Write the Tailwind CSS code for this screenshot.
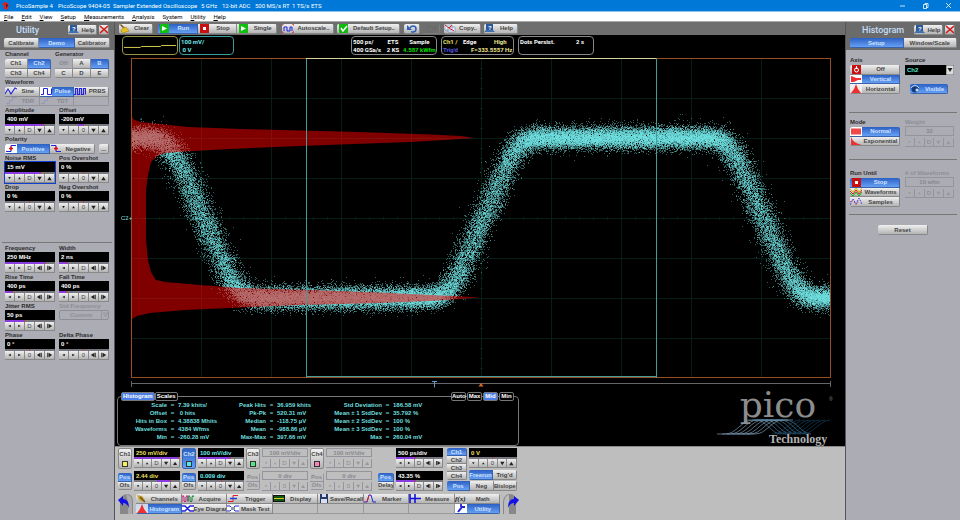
<!DOCTYPE html>
<html lang="en">
<head>
  <meta charset="UTF-8" />
  <meta name="viewport" content="width=device-width, initial-scale=1.0"/>
  <title>PicoSample 4</title>
  <script src="https://cdn.jsdelivr.net/npm/@tailwindcss/browser@4"></script>
</head>
<body class="h-screen flex flex-col overflow-hidden bg-[#acacb5] font-['Liberation_Sans',sans-serif] text-[6px] leading-[8px] font-bold text-[#2c2c2c] whitespace-nowrap">

  <!-- title bar -->
  <header class="h-3 shrink-0 flex items-center bg-[#0078d7] border-b border-[#8cc4f0] text-white font-normal font-['Roboto',sans-serif]">
    <svg class="w-4 h-2.5" viewBox="0 0 16 10"><path d="M4 1l4 1 1 3-2 4-4-2 2-2-3-1z" fill="#e02020"/><path d="M6 3l2 1-2 3z" fill="#222"/></svg>
    <span class="w-[42px]">PicoSample 4</span>
    <span class="w-[55px]">PicoScope 9404-05</span>
    <span class="w-[88px]">Sampler Extended Oscilloscope</span>
    <span class="w-[21px]">5 GHz</span>
    <span class="w-[33px]">12-bit ADC</span>
    <span class="w-[37px]">500 MS/s RT</span>
    <span>1 TS/s ETS</span>
    <div class="ml-auto flex gap-4 pr-2">
      <button aria-label="Minimize"><svg class="w-[7px] h-[7px]" viewBox="0 0 7 7"><path d="M1 4h5" stroke="#fff" stroke-width=".8"/></svg></button>
      <button aria-label="Restore"><svg class="w-[7px] h-[7px]" viewBox="0 0 7 7" fill="none" stroke="#fff" stroke-width=".8"><path d="M1.5 2.5h3v4h-3zM3 2.5v-1h3v4h-1.500"/></svg></button>
      <button aria-label="Close"><svg class="w-[7px] h-[7px]" viewBox="0 0 7 7"><path d="M1 1l5 5M6 1l-5 5" stroke="#fff" stroke-width=".8"/></svg></button>
    </div>
  </header>
  <nav class="h-[10px] shrink-0 flex items-center gap-2 pl-1 bg-white text-black font-normal font-['Roboto',sans-serif] border-b border-[#aaa]">
    <button><u>F</u>ile</button><button><u>E</u>dit</button><button><u>V</u>iew</button><button><u>S</u>etup</button><button><u>M</u>easurements</button><button><u>A</u>nalysis</button><button>S<u>y</u>stem</button><button><u>U</u>tility</button><button><u>H</u>elp</button>
  </nav>

  <div class="flex-1 min-h-0 flex">

    <!-- utility panel -->
    <aside class="w-[115px] shrink-0 border-r border-[#555]">
      <div class="h-7 bg-[#6b6b6b] px-1 pt-px">
        <div class="h-[14px] flex items-center">
          <h2 class="w-16 pl-3 text-[9px] font-medium text-[#c3defa] font-['Roboto',sans-serif]">Utility</h2>
          <div class="w-[29px] h-[10px] grid" data-btns="#help Help"></div>
          <div class="w-[10px] h-[10px] ml-[2px] grid" data-btns="#close"></div>
        </div>
        <div class="mt-px h-[10px] grid grid-cols-3" data-btns="Calibrate|*Demo|Calibrator"></div>
      </div>
      <div class="px-[5px]">
        <div class="flex justify-between">
          <div class="w-[46px]"><div class="h-[9px]">Channel</div><div class="h-[19px] grid grid-cols-2" data-btns="Ch1|*Ch2|Ch3|Ch4"></div></div>
          <div class="w-[54px]"><div class="h-[9px]">Generator</div><div class="h-[19px] grid grid-cols-3" data-btns="!Off|A|*B|C|D|E"></div></div>
        </div>
        <div class="h-[9px]">Waveform</div>
        <div class="h-[19px] grid grid-cols-3" data-btns="#sine Sine|*#pulse Pulse|#prbs PRBS|!#step TDR|!#step TDT|!"></div>
        <div class="grid grid-cols-2 gap-x-1">
          <div data-field="Amplitude" data-value="400 mV" data-bar="0,78"></div>
          <div data-field="Offset" data-value="-200 mV" data-bar="38,12" data-mid="0"></div>
        </div>
        <div class="h-[9px]">Polarity</div>
        <div class="flex justify-between h-[10px]">
          <div class="w-[90px] grid grid-cols-2" data-btns="*#rise Positive|#fall Negative"></div>
          <div class="w-[10px] grid" data-btns="..."></div>
        </div>
        <div class="grid grid-cols-2 gap-x-1">
          <div data-field="Noise RMS" data-value="15 mV" data-bar="0,72" data-focus="1"></div>
          <div data-field="Pos Overshot" data-value="0 %" data-bar="48,0" data-mid="0"></div>
          <div data-field="Drop" data-value="0 %" data-bar="48,0" data-mid="0"></div>
          <div data-field="Neg Overshot" data-value="0 %" data-bar="48,0" data-mid="0"></div>
        </div>
      </div>
      <hr class="mx-[2px] mt-[30px] border-[#777]" />
      <div class="px-[5px] pt-px grid grid-cols-2 gap-x-1">
        <div data-field="Frequency" data-value="250 MHz" data-bar="0,82" data-dir="h"></div>
        <div data-field="Width" data-value="2 ns" data-bar="0,17" data-dir="h"></div>
        <div data-field="Rise Time" data-value="400 ps" data-bar="0,15" data-dir="h"></div>
        <div data-field="Fall Time" data-value="400 ps" data-bar="0,15" data-dir="h"></div>
        <div data-field="Jitter RMS" data-value="50 ps" data-bar="0,40" data-dir="h"></div>
        <label class="block text-[#8e8e96]">
          <span class="block h-2">Std Frequency</span>
          <span class="relative block">
            <select disabled class="block w-full h-[10px] appearance-none rounded-xs border border-[#8e8e96] pl-2.5 leading-[8px] opacity-100"><option>Custom</option></select>
            <svg class="absolute right-0 top-0 w-2 h-[10px]" viewBox="0 0 8 10"><path d="M.5 0v10M2.500 3h4l-2 4z" fill="none" stroke="#8e8e96" stroke-width=".7"/></svg>
          </span>
        </label>
        <div data-field="Phase" data-value="0 °" data-bar="48,0" data-mid="0" data-dir="h"></div>
        <div data-field="Delta Phase" data-value="0 °" data-bar="48,0" data-mid="0" data-dir="h"></div>
      </div>
    </aside>

    <!-- scope display -->
    <main class="flex-1 min-w-0 flex flex-col bg-black">
      <div class="h-[13px] shrink-0 flex items-center pl-1 bg-[#6e6e6e] [&>div]:h-[10px] [&>div]:grid">
        <div class="w-[34px]" data-btns="#broom Clear"></div>
        <div class="w-[119px] ml-[5px] grid-cols-3" data-btns="*#play Run|#stop Stop|#play Single"></div>
        <div class="w-[52px] ml-[5px]" data-btns="#auto Autoscale.."></div>
        <div class="w-[63px] ml-[3px]" data-btns="#check Default Setup.."></div>
        <div class="w-4 ml-1" data-btns="#undo"></div>
        <div class="w-[17px] ml-[3px] opacity-40" data-btns="!#redo"></div>
        <div class="w-[37px] ml-1" data-btns="#copy Copy.."></div>
        <div class="w-[34px] ml-[3px]" data-btns="#help Help"></div>
      </div>

      <div class="h-[23px] shrink-0 flex pl-[7px] pt-px font-['Roboto',sans-serif] [&>div]:h-[19px] [&>div]:rounded-sm [&>div]:border [&>div]:px-px [&>div]:pt-px text-white">
        <div class="w-14 border-[#9a9440]"><svg class="w-full h-4" viewBox="0 0 54 16" fill="none"><path d="M0 9.500h17l1-1h20l1-1h15" stroke="#d8d050"/></svg></div>
        <div class="w-[55px] ml-px border-[#3c9c9c] text-[#6fe8e8]">100 mV/<br>&nbsp;0 V</div>
        <div class="w-[86px] ml-[117px] border-[#888] grid grid-cols-[30px_20px_auto]"><span>500 ps/</span><span class="text-center">ETS</span><span class="text-center">Sample</span><span>400 GSa/s</span><span class="text-center">2 KS</span><span class="text-right text-[#00e000]">4.587 kWfm</span></div>
        <div class="w-[73px] ml-1 border-[#888] grid grid-cols-[20px_auto_auto]"><span class="text-[#e8e060]">Ch1 /</span><span>Edge</span><span class="text-[#f0e890] text-center">High</span><span class="text-[#5656e0]">Trig'd</span><span class="col-span-2 text-[#f0e890] pl-2">F=333.5557 Hz</span></div>
        <div class="w-[76px] ml-1 border-[#888] flex justify-between"><span>Dots Persist.</span><span class="pr-2">2 s</span></div>
      </div>

      <div class="relative flex-1 min-h-0 pl-4 pr-3.5 flex">
        <canvas id="scope" class="block flex-1 min-w-0 w-full h-full"></canvas>
        <span class="absolute left-1.5 top-1/2 -translate-y-1/2 font-normal text-[#7fe0e0]">C2+</span>
      </div>
      <div class="h-[13px] shrink-0 pl-4 pr-3.5">
        <svg class="w-full h-[11px]" viewBox="0 0 700 11" preserveAspectRatio="none" fill="none" stroke="#666"><path d="M0 5.500h700M.5 3v6M699.500 3v6"/><path d="M301 3.500h5M303.500 3.500v6" stroke="#5a9ad0"/><path d="M347.500 8.500h5l-2.500-3.500z" fill="#e06820" stroke="none"/></svg>
      </div>

      <!-- measurements -->
      <div class="h-[55px] shrink-0 flex justify-between pl-[2px] pr-2">
        <section class="relative w-[402px] mt-[5px] h-[50px] rounded-sm border border-[#777] pt-1 text-[#6fdede]">
          <div class="absolute left-[3px] -top-[5px] flex [&>button]:h-[9px] [&>button]:px-px [&>button]:border [&>button]:border-[#777] [&>button]:rounded-xs [&>button]:leading-[7px] text-white">
            <button class="bg-[#4c80e8]">Histogram</button><button class="bg-black">Scales</button>
          </div>
          <div class="absolute right-1 -top-[5px] flex gap-px [&>button]:h-[9px] [&>button]:w-[15px] [&>button]:border [&>button]:border-[#777] [&>button]:rounded-xs [&>button]:leading-[7px] text-white">
            <button class="bg-black">Auto</button><button class="bg-black">Max</button><button class="bg-[#4c80e8]">Mid</button><button class="bg-black">Min</button>
          </div>
          <table class="table-fixed w-[315px] border-collapse">
            <colgroup><col class="w-[49px]"><col class="w-[11px]"><col class="w-[38px]"><col class="w-[50px]"><col class="w-[11px]"><col class="w-[38px]"><col class="w-[67px]"><col class="w-[11px]"><col class="w-10"></colgroup>
            <tbody id="stats"></tbody>
          </table>
        </section>
        <svg class="w-32 h-[55px]" viewBox="0 0 128 55">
          <text x="69" y="26" text-anchor="middle" font-family="DejaVu Serif" font-weight="400" font-size="36" fill="#8c8c8c">pico</text>
          <text x="120" y="10" font-family="Liberation Sans" font-weight="400" font-size="5" fill="#8c8c8c">®</text>
          <g id="logo-waves" fill="none" stroke-width=".7"></g>
          <text x="60" y="52" font-family="Liberation Serif" font-weight="700" font-size="12" fill="#b4b4b4">Technology</text>
        </svg>
      </div>

      <!-- channel controls -->
      <footer class="h-[74px] shrink-0 bg-[#bebebe] border-t border-[#888] pl-[3px] pt-px">
        <div class="flex">
          <div class="flex gap-[2px]" id="channels"></div>
          <div class="ml-1.5 w-4 pt-[25px]"><div class="h-[17px] grid" data-btns="*Pos|Delay"></div></div>
          <div class="ml-[2px] w-[47px] flex flex-col gap-[3px] text-white">
            <div data-name="Time base" data-value="500 ps/div" data-bar="0,42" data-dir="h"></div>
            <div data-name="Delay" data-value="43.35 %" data-bar="0,43" data-dir="h"></div>
          </div>
          <div class="ml-1 w-[70px]">
            <div class="flex gap-[2px]">
              <div class="w-5 h-8 grid" data-btns="*Ch1|Ch2|Ch3|Ch4"></div>
              <div class="w-12">
                <div class="text-[#f0e060]" data-name="Trigger level" data-value="0 V" data-bar="48,0" data-mid="0"></div>
                <div class="mt-[2px] h-[10px] grid grid-cols-2" data-btns="*Freerun|Trig'd"></div>
              </div>
            </div>
            <div class="mt-px h-[10px] grid grid-cols-3" data-btns="*Pos|Neg|Bislope"></div>
          </div>
        </div>
        <div class="mt-[3px] flex items-center gap-[2px]">
          <svg class="w-4 h-5" viewBox="0 0 16 20"><path d="M2 20V8q1-8 7-8t6 8v12z" fill="#888"/><path d="M8 0q6 1 6 8v12h-4V8z" fill="#aaa"/><path d="M0 6l5-4v3q6 0 6 9-2-5-6-5v3z" fill="#1111e8"/></svg>
          <div class="w-[364px] h-5 grid grid-cols-8" data-btns="#brush Channels|#acquire Acquire|#trigger Trigger|#display Display|#disk Save/Recall|#marker Marker|#measure Measure|#math Math|*#histv Histogram|#eye Eye Diagram|#mask Mask Test|~|~|~|~|*#wrench Utility"></div>
          <svg class="w-[18px] h-5" viewBox="0 0 18 20"><path d="M1 20V8q1-8 7-8t6 8v12z" fill="#888"/><path d="M2 20V8q1-7 5-7v19z" fill="#bbb"/><path d="M17 6l-5-4v3q-6 0-6 9 2-5 6-5v3z" fill="#1111e8"/></svg>
        </div>
      </footer>
    </main>

    <!-- histogram panel -->
    <aside class="w-[115px] shrink-0 border-l border-[#555]">
      <div class="h-7 bg-[#6b6b6b] pl-1 pr-[3px] pt-px">
        <div class="h-[14px] flex items-center">
          <h2 class="w-16 pl-3 text-[9px] font-medium text-[#c3defa] font-['Roboto',sans-serif]">Histogram</h2>
          <div class="w-[29px] h-[10px] grid" data-btns="#help Help"></div>
          <div class="w-[10px] h-[10px] ml-[2px] grid" data-btns="#close"></div>
        </div>
        <div class="mt-px h-[10px] grid grid-cols-2" data-btns="*Setup|Window/Scale"></div>
      </div>
      <div class="px-[3px]">
        <div class="flex gap-[5px] px-px pt-[6px] h-[62px]">
          <div class="w-[50px]"><div class="h-[9px]">Axis</div><div class="h-[29px] grid" data-btns="#power Off|*#histh Vertical|#histv Horizontal"></div></div>
          <div class="w-[49px]">
            <label class="block h-[9px]" for="source">Source</label>
            <div class="relative">
              <select id="source" class="block w-full h-[10px] appearance-none bg-black text-[#50e8d0] pl-[2px]"><option>Ch2</option></select>
              <svg class="absolute right-0 top-0 w-2 h-[10px]" viewBox="0 0 8 10"><rect width="8" height="10" fill="#ddd" stroke="#666"/><path d="M1.500 3h5l-2.500 4z" fill="#222"/></svg>
            </div>
            <div class="ml-[5px] mt-[9px] w-[38px] h-[10px] grid" data-btns="*#eyeball Visible"></div>
          </div>
        </div>
        <hr class="border-[#777]" />
        <div class="flex gap-[5px] px-px pt-[5px] h-[46px]">
          <div class="w-[50px]"><div class="h-[9px]">Mode</div><div class="h-[19px] grid" data-btns="*#norm Normal|#expo Exponential"></div></div>
          <div class="w-[49px]" data-field="Weight" data-value="32" data-off="1"></div>
        </div>
        <hr class="border-[#777]" />
        <div class="flex gap-[5px] px-px pt-[9px] h-[54px]">
          <div class="w-[50px]"><div class="h-[9px]">Run Until</div><div class="h-[29px] grid" data-btns="*#stop Stop|#waves Waveforms|#samples Samples"></div></div>
          <div class="w-[49px]" data-field="# of Waveforms" data-value="10 wfm" data-off="1"></div>
        </div>
        <hr class="border-[#777]" />
        <div class="mt-[10px] mx-auto w-[50px] h-[10px] grid" data-btns="Reset"></div>
      </div>
    </aside>
  </div>

  <script>
    // icon bodies, all on a 12x9 box
    const icons = {
      help: '<path d="M2 0h7v7H2z" fill="#2a5a9a"/><path d="M0 8h11l-2-2H2z" fill="#3f70b0"/><text x="4" y="6" font-size="6" fill="#fff">?</text>',
      close: '<path d="M2 1l8 7M10 1L2 8" stroke="#d81818" stroke-width="1.6"/>',
      sine: '<path d="M0 7l3-5 3 5 4-6 2 1" fill="none" stroke="#2222dd" stroke-width="1.100"/>',
      pulse: '<path d="M0 0h12v9H0z" fill="#fff"/><path d="M1 7.500h2.500v-6h4v6h4v-6" fill="none" stroke="#2222dd"/>',
      prbs: '<path d="M0 7.500h1.500v-6h2v6h2v-6h2v6h2v-6h2v6" fill="none" stroke="#2222dd" stroke-width="1.200"/>',
      step: '<path d="M1 7.500h3.500v-3h3v-3h4" fill="none" stroke="#9696b8"/>',
      rise: '<path d="M0 0h12v9H0z" fill="#fff"/><path d="M1 7.500h5v-6h5" fill="none" stroke="#2222dd"/><path d="M4 4.500h4M6 2.500v4" stroke="#e01010" stroke-width="1.300"/>',
      fall: '<path d="M1 1.500h5v6h5" fill="none" stroke="#2222dd"/><path d="M4 4.500h4M6 2.500v4" stroke="#e01010" stroke-width="1.300"/>',
      broom: '<path d="M2 0l4 4-1 1-4-4z" fill="#7a4a10"/><path d="M4 4l3-1 3 4-6 2-2-2z" fill="#e8c020" stroke="#a07810" stroke-width=".5"/>',
      play: '<path d="M2 0h9v9H2z" fill="#10c010"/><path d="M4 2l5 2.500L4 7z" fill="#fff"/>',
      stop: '<path d="M2 0h9v9H2z" fill="#c81010"/><path d="M5 3h3v3H5z" fill="#fff"/>',
      power: '<path d="M2 0h9v9H2z" fill="#c81010"/><circle cx="6.500" cy="5" r="2" fill="none" stroke="#fff"/><path d="M6.500 1v3" stroke="#fff"/>',
      auto: '<path d="M2 7V3h3v4h3V3h2v4" fill="none" stroke="#2222dd"/><path d="M0 2V0h2M10 0h2v2M12 7v2h-2M2 9H0V7" fill="none" stroke="#e02020"/>',
      check: '<path d="M2 0h9v9H2z" fill="#10b810"/><path d="M4 4l2 3 4-5" fill="none" stroke="#fff" stroke-width="1.400"/>',
      undo: '<path d="M5 8h2q3 0 3-3T7 2Q5 2 4 4" fill="none" stroke="#2c5fb8" stroke-width="1.500"/><path d="M1 1v5h5z" fill="#2c5fb8"/>',
      redo: '<path d="M7 8H5Q2 8 2 5t3-3q2 0 3 2" fill="none" stroke="#666"/><path d="M11 1v5H6z" fill="#666"/>',
      copy: '<path d="M1 1h7v5H1zM4 3h7v5H4z" fill="#eef" stroke="#6688aa" stroke-width=".6"/><path d="M1 1l4 3 3-3M5 4l5 3" stroke="#d82020" fill="none"/>',
      histh: '<path d="M0 0h12v9H0z" fill="#fff"/><path d="M1 1l3 1 2 1h5v2H8L4 7H1z" fill="#f03030"/>',
      histv: '<path d="M0 0h12v9H0z" fill="#f4f4f4" opacity=".8"/><path d="M1 9h10L8 5 6 0 4 5z" fill="#f03030"/>',
      eyeball: '<circle cx="5" cy="5" r="3.500" fill="#123a80"/><path d="M1 4q4-5 8 0" stroke="#cde" fill="none"/><circle cx="7" cy="6" r="1.500" fill="#cde"/>',
      norm: '<path d="M0 0h12v9H0z" fill="#fff"/><path d="M1 1.500h10v6H1z" fill="#f04848"/>',
      expo: '<path d="M1 0q1 7 11 9H1z" fill="#f03030"/>',
      waves: '<path d="M0 3l3 3 3-4 3 4 3-4" fill="none" stroke="#e02020"/><path d="M0 5l3 3 3-4 3 4 3-4" fill="none" stroke="#10b010"/><path d="M0 1l3 3 3-4 3 4 3-4" fill="none" stroke="#d8c010"/>',
      samples: '<path d="M0 8l3-6 3 5 3-6 3 6" fill="none" stroke="#4040e0" stroke-dasharray="2 1"/><path d="M0 5l3-2 3 5 3-4" fill="none" stroke="#e03030" stroke-dasharray="1 2"/>',
      brush: '<path d="M1 1l5 1 3 4-2 2-4-2z" fill="#c8a030"/><path d="M4 3l5 5" stroke="#775511" stroke-width="1.500"/>',
      acquire: '<path d="M0 8V3q1-3 2 0v4q1 2 2 0V3q1-3 2 0v5" fill="none" stroke="#c02080"/><path d="M6 7V3q1-3 2 0v4q1 2 2 0V3q1-3 2 0" fill="none" stroke="#108030"/>',
      trigger: '<path d="M1 7.500h5v-6h5" fill="none" stroke="#e02020"/><path d="M3 4.500h7" stroke="#2040e0" stroke-width="1.500"/>',
      display: '<path d="M0 1h12v7H0z" fill="#111"/><path d="M1 3h10M1 6h10" stroke="#10a010"/><path d="M1 4.500h10" stroke="#d8c820"/>',
      disk: '<path d="M2 0h8v9H2z" fill="#223a6a"/><path d="M4 0h4v3H4zM3 5h6v4H3z" fill="#dde"/>',
      marker: '<path d="M0 8h3l2-7h2l2 7h3" fill="none" stroke="#2222dd"/><path d="M3 8l2-7" stroke="#e02020"/>',
      measure: '<path d="M1 0v9M6 0v9M1 4.500h11" stroke="#1111dd" stroke-width="1.600"/>',
      math: '<text x="0" y="7" font-size="7" font-style="italic" font-family="Liberation Serif" fill="#111">f(x)</text>',
      eye: '<path d="M0 1h12v7H0z" fill="#fff"/><path d="M0 2h3l5 5h4M0 7h3l5-5h4" fill="none" stroke="#2222dd" stroke-width="1.500"/>',
      mask: '<path d="M0 1h12v7H0z" fill="#fff"/><path d="M0 2h3l5 5h4M0 7h3l5-5h4" fill="none" stroke="#2222dd"/><path d="M4 3h4v3H4z" fill="#8899aa"/>',
      wrench: '<path d="M0 0h12v9H0z" fill="#fff"/><path d="M3 8l4-5" stroke="#2222dd" stroke-width="2"/><path d="M6 3V0M6 3l4 0" stroke="#2222dd" stroke-width="1.800"/>'
    };
    const icon = n => `<svg class="w-3 h-[9px] shrink-0" viewBox="0 0 12 9">${icons[n]}</svg>`;

    const base = "min-w-0 min-h-0 overflow-hidden flex items-center border-r border-b leading-[8px] ";
    const looks = {
      "*": "bg-linear-to-b from-[#2c60c4] to-[#66a0f4] border-[#3a62a8] text-[#cfe2ff]",
      "!": "border-[#94949c] text-[#88888f]",
      "~": "bg-[#bebebe] border-[#999]",
      "": "bg-linear-to-b from-[#f0f0f0] to-[#b4b4b4] border-[#888] text-[#444]"
    };
    // "*" pressed, "!" disabled, "~" empty slot, "#name" leading icon
    function buttons(spec) {
      return spec.split("|").map(s => {
        const m = s.match(/^([*!~]?)(?:#(\w+) ?)?(.*)$/);
        const ic = m[2] ? icon(m[2]) : "";
        const label = m[3] ? `<span class="flex-1 text-center">${m[3]}</span>` : "";
        const off = m[1] === "!" || m[1] === "~" ? "disabled" : "";
        return `<button ${off} ${m[3] ? "" : `aria-label="${m[2] || "empty"}"`} class="${base}${looks[m[1]]} ${label ? "" : "justify-center"}">${ic}${label}</button>`;
      }).join("");
    }

    const arrows = {
      v: ["M3.500 3.500h3l-1.500 2.500z", "M3.500 6h3l-1.500-2.500z", "", "M2.500 3h5l-2.500 4z", "M2.500 7h5l-2.500-4z"],
      h: ["M6.500 3v3l-3-1.500z", "M3.500 3v3l3-1.500z", "", "M6 2v5l-4-2.500zM6.500 2h1v5h-1z", "M4 2v5l4-2.500zM2.500 2h1v5h-1z"]
    };
    function field(d) {
      const off = d.off;
      const [left, width] = (d.bar || "0,0").split(",");
      const keys = arrows[d.dir || "v"].map((p, i) => {
        const body = i === 2 ? `<span class="flex-1 text-center font-normal">${d.mid || "D"}</span>`
          : `<svg class="w-full h-full" viewBox="0 0 10 9"><path d="${p}" fill="${off ? "#999" : "#222"}"/></svg>`;
        return `<button ${off ? "disabled" : ""} aria-label="step ${i + 1}" class="${base}${looks[off ? "!" : ""]}">${body}</button>`;
      }).join("");
      const title = d.field ? `<span class="block h-2 ${off ? "text-[#8e8e96]" : ""}">${d.field}</span>` : "";
      return `<label class="block">${title}
          <input ${off ? "disabled" : ""} aria-label="${d.field || d.name}" value="${d.value}" class="block w-full px-[2px] ${d.field ? "h-[10px]" : "h-[9px]"} ${off ? "text-center text-[#88888f] border border-[#94949c]" : "bg-black " + (d.field ? "text-white" : "")} ${d.focus ? "outline-1 outline-[#1040d0]" : ""}">
        </label>
        <div class="h-[2px] relative ${off ? "" : "bg-[#77777f]"}">
          ${off ? "" : `<div class="absolute h-[2px] bg-[#8a3ce0] border-r border-[#c04040]" style="left:${left}%;width:${Math.max(width, 2)}%"></div>`}
        </div>
        <div class="h-[9px] grid grid-cols-5 ${d.focus ? "outline-1 outline-[#1040d0]" : ""}">${keys}</div>`;
    }

    const channels = [
      { n: 1, dot: "bg-[#f8f060]", text: "text-[#f0e060]", scale: "250 mV/div", ofs: "2.44 div", bar: "0,98", obar: "50,30" },
      { n: 2, dot: "bg-[#50e8e8]", text: "text-[#70f0f0]", scale: "100 mV/div", ofs: "0.009 div", bar: "0,72", obar: "50,0", on: 1 },
      { n: 3, dot: "bg-[#50e880]", text: "", scale: "100 mV/div", ofs: "0 div", off: 1 },
      { n: 4, dot: "bg-[#ff80b8]", text: "", scale: "100 mV/div", ofs: "0 div", off: 1 }
    ];
    document.getElementById("channels").innerHTML = channels.map(c => `
      <div class="w-[62px] flex gap-[2px]">
        <div class="w-[14px]">
          <button class="w-full h-[21px] flex flex-col items-center justify-around border rounded-xs ${looks[c.on ? "*" : ""]}">Ch${c.n}<span class="w-[6px] h-[6px] border border-[#333] ${c.dot}"></span></button>
          <div class="mt-1 h-[17px] grid" data-btns="${c.off ? "!Pos|!Ofs" : "*Pos|Ofs"}"></div>
        </div>
        <div class="flex-1 flex flex-col gap-[3px] ${c.text}">
          <div data-name="Ch${c.n} scale" data-value="${c.scale}" data-bar="${c.bar || ""}" ${c.off ? 'data-off="1"' : ""}></div>
          <div data-name="Ch${c.n} offset" data-value="${c.ofs}" data-bar="${c.obar || ""}" data-mid="0" ${c.off ? 'data-off="1"' : ""}></div>
        </div>
      </div>`).join("");

    document.querySelectorAll("[data-btns]").forEach(e => {
      e.innerHTML = buttons(e.dataset.btns);
      e.classList.add("rounded-xs", "overflow-hidden");
    });
    document.querySelectorAll("[data-value]").forEach(e => e.innerHTML = field(e.dataset));

    const stats = [
      ["Scale", "7.39 khits/", "Peak Hits", "36.959 khits", "Std Deviation", "186.58 mV"],
      ["Offset", "&nbsp;0 hits", "Pk-Pk", "520.31 mV", "Mean ± 1 StdDev", "35.792 %"],
      ["Hits in Box", "4.38838 Mhits", "Median", "-118.75 µV", "Mean ± 2 StdDev", "100 %"],
      ["Waveforms", "4384 Wfms", "Mean", "-988.86 µV", "Mean ± 3 StdDev", "100 %"],
      ["Min", "-260.28 mV", "Max-Max", "397.66 mV", "Max", "260.04 mV"]
    ];
    document.getElementById("stats").innerHTML = stats.map(r => "<tr>" + [0, 2, 4].map(i =>
      `<th scope="row" class="p-0 text-right font-bold">${r[i]}</th><td class="p-0 text-center">=</td><td class="p-0">${r[i + 1]}</td>`).join("") + "</tr>").join("");

    let waves = "";
    for (let i = 0; i < 7; i++) {
      const x = 13 + i * 5;
      waves += `<path d="M${x - 5} 43h8c12 0 16-14 28-14h10" stroke="#7c9cb4"/><path d="M${x + 25} 29h8c12 0 16 14 26 14" stroke="#4a7896"/><path d="M${x + 50} 43c12 0 18-14 28-14" stroke="#12405e"/>`;
    }
    document.getElementById("logo-waves").innerHTML = waves;

    // plot is worked out on a 10x8 division screen, 70x40 units each
    const level0 = 159.5;
    const ramp = t => Math.max(-0.5, Math.min(0.5, t));
    function level(x) {
      let s = 0;
      for (const o of [-12, -4, 4, 12]) s += ramp((x + o - 72) / 70) - ramp((x + o - 352) / 70) + ramp((x + o - 632) / 70);
      return level0 + 160 * s / 4;
    }
    const hist = [[0,56],[2,61],[9,64],[29,66],[57,69],[110,71],[170,72.5],[227,74],[300,76.5],[330,78],[343,80],[314,82],[279,84],[209,86.5],[144,89],[89,91.5],[54,93.5],[34,95],[26,98],[20,104],[17,117],[15,132],[15,182],[17,202],[20,214],[25,222],[34,224],[69,227],[109,230],[179,232],[249,234.5],[299,237],[324,238],[349,239.5],[329,241],[299,243],[249,245],[169,247],[109,249.5],[54,252],[19,255],[6,258],[1,261],[0,264]];

    const scope = document.getElementById("scope");
    function draw() {
      let seed = 7;
      const rnd = () => (seed = (seed * 16807) % 2147483647) / 2147483647;
      const gauss = () => Math.sqrt(-2 * Math.log(rnd())) * Math.cos(6.28318 * rnd());
      const w = scope.width = scope.clientWidth, h = scope.height = scope.clientHeight;
      const g = scope.getContext("2d");
      const kx = w / 700, ky = h / 320;
      g.fillStyle = "#051e17";
      for (let i = 1; i < 10; i++) g.fillRect(Math.round(i * 70 * kx), 0, 1, h);
      for (let i = 1; i < 8; i++) g.fillRect(0, Math.round(i * 40 * ky), w, 1);
      for (let i = 1; i < 50; i++) g.fillRect(Math.round(i * 14 * kx), h / 2 - 1, 1, 3);
      for (let i = 1; i < 32; i++) g.fillRect(w / 2 - 1, Math.round(i * 10 * ky), 3, 1);
      g.fillStyle = "rgba(112,226,226,0.42)";
      for (let x = -20; x < 720; x++)
        for (let n = 0; n < 85; n++) {
          const px = x + gauss() * 7;
          g.fillRect(Math.round(px * kx), Math.round((level(x) + gauss() * 5.5) * ky), 1, 1);
        }
      g.fillStyle = "rgba(255,0,0,0.5)";
      g.beginPath();
      hist.forEach(p => g.lineTo(p[0] * kx, p[1] * ky));
      g.fill();
      g.strokeStyle = "#9a4c22";
      g.strokeRect(0.5, 0.5, w - 1, h - 1);
      const a = Math.round(175 * kx), b = Math.round(525 * kx);
      g.fillStyle = "#429c9c";
      g.fillRect(a, 0, 1, h);
      g.fillRect(b, 0, 1, h);
      g.fillRect(a, h - 2, b - a, 1);
      g.fillStyle = "#d8d4a0";
      g.fillRect(a, 0, b - a, 1);
    }
    draw();
    new ResizeObserver(draw).observe(scope);
  </script>
</body>
</html>
